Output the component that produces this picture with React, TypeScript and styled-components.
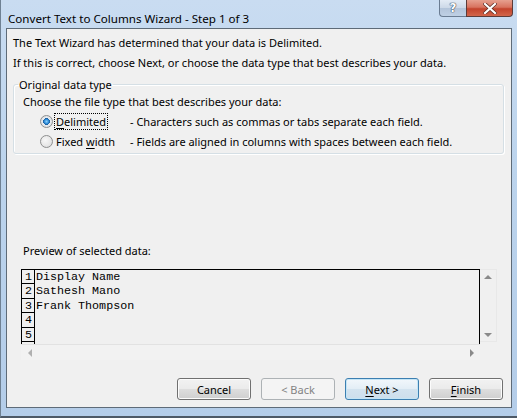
import * as React from 'react';
import styled, { createGlobalStyle } from 'styled-components';

const Global = createGlobalStyle`
    html, body {
        margin: 0;
        padding: 0;
        background: #ffffff;
    }
    body {
        font-family: "Noto Sans", "Open Sans", sans-serif;
        font-size: 11px;
        color: #000000;
    }
`

const rows = ['Display Name', 'Sathesh Mano', 'Frank Thompson', '', '']

const App = () => {
    return (
        <>
            <Global />
            <Window>
                <TitleBar>
                    <Title>Convert Text to Columns Wizard - Step 1 of 3</Title>
                    <CaptionButtons>
                        <HelpButton>?</HelpButton>
                        <CloseButton>
                            <svg width="14" height="11" viewBox="0 0 14 11">
                                <path d="M2 1 L12 10 M12 1 L2 10" stroke="#5a2a22" strokeWidth="3.6" strokeLinecap="square" />
                                <path d="M2 1 L12 10 M12 1 L2 10" stroke="#ffffff" strokeWidth="2.2" strokeLinecap="square" />
                            </svg>
                        </CloseButton>
                    </CaptionButtons>
                </TitleBar>
                <Client>
                    <Line top={6}>The Text Wizard has determined that your data is Delimited.</Line>
                    <Line top={5}>If this is correct, choose Next, or choose the data type that best describes your data.</Line>
                    <Group>
                        <Legend>Original data type</Legend>
                        <Prompt>Choose the file type that best describes your data:</Prompt>
                        <RadioRow>
                            <Radio checked />
                            <RadioLabel focused><U>D</U>elimited</RadioLabel>
                            <Desc>- Characters such as commas or tabs separate each field.</Desc>
                        </RadioRow>
                        <RadioRow>
                            <Radio />
                            <RadioLabel>Fixed <U>w</U>idth</RadioLabel>
                            <Desc>- Fields are aligned in columns with spaces between each field.</Desc>
                        </RadioRow>
                    </Group>
                    <PreviewLabel>Preview of selected data:</PreviewLabel>
                    <Preview>
                        <DataArea>
                            {rows.map((r, i) => (
                                <DataRow key={i}>
                                    <RowNum>{i + 1}</RowNum>
                                    <RowText>{r}</RowText>
                                </DataRow>
                            ))}
                            <DataRow>
                                <RowNum />
                                <RowText />
                            </DataRow>
                        </DataArea>
                        <VScroll>
                            <Arrow dir="up" />
                            <Arrow dir="down" />
                        </VScroll>
                        <HScroll>
                            <Arrow dir="left" />
                            <Arrow dir="right" />
                        </HScroll>
                    </Preview>
                    <Buttons>
                        <Button>Cancel</Button>
                        <Button disabled>&lt; Back</Button>
                        <Button primary><U>N</U>ext &gt;</Button>
                        <Button><U>F</U>inish</Button>
                    </Buttons>
                </Client>
            </Window>
        </>
    )
}

const Window = styled.div`
    width: 517px;
    height: 418px;
    box-sizing: border-box;
    display: flex;
    flex-direction: column;
    padding: 0 5px 8px 5px;
    background: linear-gradient(180deg, #c9dcf1 0%, #bcd4ed 40%, #b4cde9 100%);
    border-left: 1px solid #6f8193;
    border-bottom: 2px solid #4d5966;
    overflow: hidden;
`

const TitleBar = styled.div`
    height: 28px;
    display: flex;
    align-items: flex-start;
    flex-shrink: 0;
`

const Title = styled.div`
    font-size: 11.6px;
    line-height: 15px;
    margin-top: 11px;
    margin-left: 2px;
    color: #000000;
    white-space: nowrap;
`

const CaptionButtons = styled.div`
    margin-left: auto;
    margin-right: -1px;
    display: flex;
`

const HelpButton = styled.div`
    width: 27px;
    height: 17px;
    box-sizing: border-box;
    border: 1px solid #6a7c92;
    border-top: none;
    border-right: none;
    border-bottom-left-radius: 4px;
    background: linear-gradient(180deg, #e3ebf5 0%, #cdd9e8 48%, #b3c4da 52%, #bfd0e4 100%);
    display: flex;
    align-items: center;
    justify-content: center;
    color: #ffffff;
    font-family: "DejaVu Sans", sans-serif;
    font-weight: bold;
    font-size: 12px;
    line-height: 12px;
    text-shadow: 0 0 1px #34445a, 0 0 1px #34445a, 0 0 1px #34445a;
`

const CloseButton = styled.div`
    width: 47px;
    height: 17px;
    box-sizing: border-box;
    border: 1px solid #5d3b38;
    border-top: none;
    border-bottom-right-radius: 4px;
    background: linear-gradient(180deg, #e6a08f 0%, #d8735f 45%, #c3432c 55%, #d2664b 100%);
    display: flex;
    align-items: center;
    justify-content: center;
`

const Client = styled.div`
    flex: 1;
    background: #f0f0f0;
    border: 1px solid #5e6b78;
    display: flex;
    flex-direction: column;
    padding: 0 7px 0 6px;
`

const Line = styled.div<{ top: number }>`
    line-height: 15px;
    margin-top: ${p => p.top}px;
    white-space: nowrap;
`

const Group = styled.fieldset`
    margin: 7px 0 0 0;
    padding: 2px 8px 2px 9px;
    border: 1px solid #d5dfe5;
    border-radius: 3px;
    box-shadow: inset 1px 1px 0 #ffffff, 1px 1px 0 #ffffff;
    display: flex;
    flex-direction: column;
`

const Legend = styled.legend`
    padding: 0 1px;
    margin-left: -5px;
    line-height: 15px;
`

const Prompt = styled.div`
    line-height: 15px;
    margin-bottom: 2px;
`

const RadioRow = styled.div`
    display: flex;
    align-items: center;
    height: 20px;
    padding-left: 17px;
`

const Radio = styled.span<{ checked?: boolean }>`
    width: 13px;
    height: 13px;
    box-sizing: border-box;
    border-radius: 50%;
    border: 1px solid #8e8f8f;
    background: ${p => p.checked
        ? 'radial-gradient(circle at 50% 50%, #8ad0f9 0%, #2e8bd8 28%, #1a5d9c 42%, #e7eaee 46%, #d6dadf 100%)'
        : 'radial-gradient(circle at 40% 40%, #f7f7f7 0%, #e6e6e6 60%, #cfd2d6 100%)'};
    flex-shrink: 0;
`

const RadioLabel = styled.span<{ focused?: boolean }>`
    margin-left: 3px;
    width: 74px;
    flex-shrink: 0;
    line-height: 15px;
    ${p => p.focused ? `
        outline: 1px dotted #000000;
        outline-offset: 0px;
        width: auto;
        margin-right: 23px;
        padding: 0 1px;
        margin-left: 2px;
    ` : ''}
`

const U = styled.span`
    text-decoration: underline;
    text-underline-offset: 2px;
`

const Desc = styled.span`
    white-space: nowrap;
    line-height: 15px;
`

const PreviewLabel = styled.div`
    margin: 89px 0 0 10px;
    line-height: 15px;
`

const Preview = styled.div`
    margin: 11px 0 0 8px;
    width: 476px;
    display: grid;
    grid-template-columns: 1fr 17px;
    grid-template-rows: 75px 16px;
`

const DataArea = styled.div`
    border: 1px solid #000000;
    border-bottom: none;
    overflow: hidden;
    background: #f0f0f0;
`

const DataRow = styled.div`
    display: flex;
    height: 14.4px;
    font-family: "Liberation Mono", "Courier New", monospace;
    font-size: 11.7px;
    line-height: 14px;
`

const RowNum = styled.div`
    width: 13px;
    flex-shrink: 0;
    border-right: 1px solid #000000;
    border-bottom: 1px solid #000000;
    box-sizing: border-box;
    text-align: center;
    padding-left: 1px;
`

const RowText = styled.div`
    white-space: pre;
    padding-left: 1px;
`

const VScroll = styled.div`
    background: #f0f0f0;
    border: 1px solid #e8e8e8;
    border-left: none;
    display: flex;
    flex-direction: column;
    justify-content: space-between;
    align-items: center;
    padding: 5px 0 4px;
    margin-bottom: 2px;
`

const HScroll = styled.div`
    border-top: 1px solid #e2e2e2;
    background: #f2f2f2;
    display: flex;
    align-items: center;
    justify-content: space-between;
    padding: 0 6px 0 7px;
`

const Arrow = styled.span<{ dir: 'up' | 'down' | 'left' | 'right' }>`
    width: 0;
    height: 0;
    border-style: solid;
    border-color: transparent;
    ${p => p.dir === 'up' && 'border-width: 0 4px 4px 4px; border-bottom-color: #8a8a8a;'}
    ${p => p.dir === 'down' && 'border-width: 4px 4px 0 4px; border-top-color: #8a8a8a;'}
    ${p => p.dir === 'left' && 'border-width: 4px 4px 4px 0; border-right-color: #b0b0b0;'}
    ${p => p.dir === 'right' && 'border-width: 4px 0 4px 4px; border-left-color: #8a8a8a;'}
`

const Buttons = styled.div`
    display: flex;
    justify-content: flex-end;
    gap: 10px;
    margin-top: 18px;
    padding-right: 1px;
`

const Button = styled.button<{ primary?: boolean }>`
    width: 74px;
    height: 22px;
    box-sizing: border-box;
    font-family: "Noto Sans", "Open Sans", sans-serif;
    font-size: 11px;
    color: #000000;
    padding: 0;
    border-radius: 3px;
    border: 1px solid ${p => p.primary ? '#3c7fb1' : '#707070'};
    background: ${p => p.primary
        ? 'linear-gradient(180deg, #f2f7fb 0%, #e3eef6 48%, #d3e3ef 52%, #cddeec 100%)'
        : 'linear-gradient(180deg, #f2f2f2 0%, #ebebeb 48%, #dddddd 52%, #cfcfcf 100%)'};
    box-shadow: inset 0 0 0 1px ${p => p.primary ? '#c4e5f6' : '#fcfcfc'};
    &:disabled {
        border-color: #adb2b5;
        background: #f4f4f4;
        color: #838383;
        box-shadow: none;
    }
`

export default App
